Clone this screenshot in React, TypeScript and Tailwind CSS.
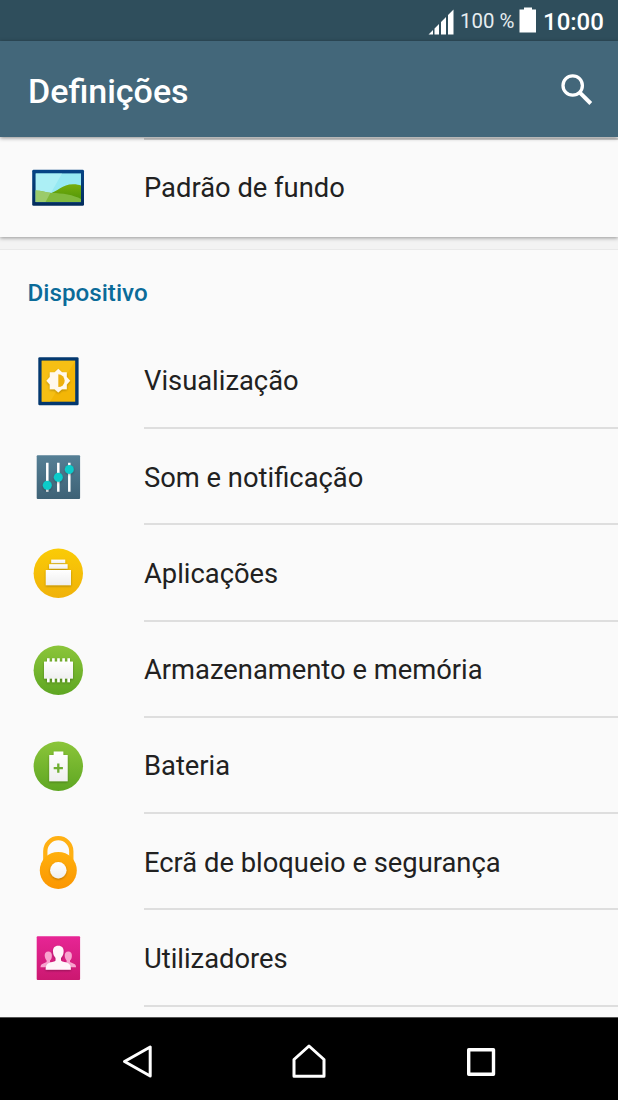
import type { ReactNode } from 'react'

function IconBox({ children }: { children: ReactNode }) {
  return (
    <svg viewBox="0 0 60 60" className="w-[60px] h-[60px] shrink-0">
      <defs>
        <linearGradient id="yellow" x1="0" y1="0" x2="0" y2="1">
          <stop offset="0" stopColor="#facb06" />
          <stop offset="1" stopColor="#f0b20a" />
        </linearGradient>
        <linearGradient id="green" x1="0" y1="0" x2="0" y2="1">
          <stop offset="0" stopColor="#8bc53a" />
          <stop offset="1" stopColor="#5ea622" />
        </linearGradient>
        <linearGradient id="paper" x1="0" y1="0" x2="0" y2="1">
          <stop offset="0" stopColor="#ffffff" />
          <stop offset="1" stopColor="#efefef" />
        </linearGradient>
        <filter id="drop" x="-20%" y="-20%" width="140%" height="150%">
          <feDropShadow dx="0" dy="1" stdDeviation="1" floodColor="#000" floodOpacity="0.3" />
        </filter>
      </defs>
      {children}
    </svg>
  )
}

function WallpaperIcon() {
  return (
    <IconBox>
      <defs>
        <linearGradient id="frame" x1="0" y1="0" x2="0" y2="1">
          <stop offset="0" stopColor="#064586" />
          <stop offset="1" stopColor="#032c5c" />
        </linearGradient>
        <linearGradient id="hill" x1="0" y1="0" x2="0" y2="1">
          <stop offset="0" stopColor="#76ad0c" />
          <stop offset="1" stopColor="#4d9408" />
        </linearGradient>
      </defs>
      <rect x="4.2" y="11.8" width="51.8" height="36" rx="1.4" fill="url(#frame)" />
      <rect x="7.7" y="15.4" width="45.3" height="28.7" fill="#96e9f2" />
      <path d="M7.7 15.4H34L24 33L18 44.1H7.7Z" fill="#b5f1f6" opacity="0.7" />
      <path d="M20 36C30 34 34 26.300 45 26.300C49 26.300 51 27 53 27.500V44.100H20Z" fill="url(#hill)" />
      <path d="M7.700 32.500C13 32.600 18 34.500 24 35C34 35 46 37 53 41V44.100H7.700Z" fill="#80b93d" />
      <path d="M7.700 32.500C13 32.600 18 34.500 22.500 34.700L17.500 44.100H7.700Z" fill="#9bcb6b" />
    </IconBox>
  )
}

function DisplayIcon() {
  return (
    <IconBox>
      <rect x="10.3" y="6.2" width="40.3" height="48" rx="1.3" fill="#03386f" />
      <rect x="13.7" y="9.7" width="33.500" height="41" fill="#f3b606" />
      <path d="M13.7 9.7H47.2L22 50.7H13.7Z" fill="#f8c51b" opacity="0.65" />
      <g filter="url(#drop)">
        <path
          d="M30.300 17.800L34 21.200H38.800V26L42.200 29.700L38.800 33.400V38.200H34L30.300 41.600L26.600 38.200H21.800V33.400L18.400 29.700L21.800 26V21.200H26.600Z"
          fill="#fff8ed"
        />
      </g>
      <path d="M30.300 23.300A6.400 6.400 0 0 1 30.300 36.100Z" fill="#edb00e" />
    </IconBox>
  )
}

function SoundIcon() {
  return (
    <IconBox>
      <defs>
        <linearGradient id="slate" x1="0" y1="0" x2="0" y2="1">
          <stop offset="0" stopColor="#557f95" />
          <stop offset="1" stopColor="#3e6276" />
        </linearGradient>
      </defs>
      <rect x="8.700" y="8.200" width="43.400" height="43.800" rx="1" fill="url(#slate)" />
      <path d="M19.300 15.800V44.800M30.300 15.800V44.800M41.300 15.800V44.800" stroke="#fff" strokeWidth="2.500" />
      <g fill="#08cbca" filter="url(#drop)">
        <circle cx="19.300" cy="38.200" r="4.500" />
        <circle cx="30.300" cy="30.300" r="4.500" />
        <circle cx="41.300" cy="22.400" r="4.500" />
      </g>
    </IconBox>
  )
}

function AppsIcon() {
  return (
    <IconBox>
      <circle cx="30.300" cy="30.300" r="24.700" fill="url(#yellow)" />
      <g fill="url(#paper)" filter="url(#drop)">
        <rect x="23.200" y="16.600" width="14" height="3.500" />
        <rect x="21.100" y="21.200" width="18.500" height="4.500" />
        <rect x="17.800" y="27" width="25.200" height="15.200" />
      </g>
    </IconBox>
  )
}

function MemoryIcon() {
  return (
    <IconBox>
      <circle cx="30.300" cy="30.300" r="24.700" fill="url(#green)" />
      <g filter="url(#drop)">
        <path
          d="M20.300 18.300V42.300M25.400 18.300V42.300M30.500 18.300V42.300M35.600 18.300V42.300M40.700 18.300V42.300"
          stroke="#fff"
          strokeWidth="2.600"
        />
        <rect x="16" y="21.600" width="29" height="17" fill="url(#paper)" />
      </g>
    </IconBox>
  )
}

function BatteryIcon() {
  return (
    <IconBox>
      <circle cx="30.300" cy="30.300" r="24.700" fill="url(#green)" />
      <path
        d="M25.700 15.400H35.300V19H39.700V45.300H21.200V19H25.700Z"
        fill="url(#paper)"
        filter="url(#drop)"
      />
      <path d="M30.300 27.600V36.800M25.700 32.200H34.900" stroke="#6fae32" strokeWidth="2.300" />
    </IconBox>
  )
}

function LockIcon() {
  return (
    <IconBox>
      <defs>
        <linearGradient id="orange" x1="0" y1="0" x2="0" y2="1">
          <stop offset="0" stopColor="#ffb00c" />
          <stop offset="1" stopColor="#fb9602" />
        </linearGradient>
      </defs>
      <path
        d="M17.300 32V19.200A13 13 0 0 1 43.300 19.200V32"
        fill="none"
        stroke="#ffb013"
        strokeWidth="4.300"
      />
      <circle cx="30.300" cy="38.400" r="18.500" fill="url(#orange)" />
      <circle cx="30.300" cy="38.200" r="8.200" fill="url(#paper)" filter="url(#drop)" />
    </IconBox>
  )
}

function UsersIcon() {
  return (
    <IconBox>
      <defs>
        <linearGradient id="pink" x1="0" y1="0" x2="0" y2="1">
          <stop offset="0" stopColor="#e72595" />
          <stop offset="1" stopColor="#cb1870" />
        </linearGradient>
      </defs>
      <rect x="8.700" y="8.200" width="43.400" height="43.800" rx="1" fill="url(#pink)" />
      <g fill="#f9a3cf">
        <path d="M20.300 23.500C17.800 23.500 16.600 25.200 16.700 27.700C16.800 30 18 31.500 18.600 32.500V34L14.300 35.900C13 36.500 12.600 37.500 12.500 39.200H28V34H22V32.500C23 31.500 23.900 30 23.900 27.700C24 25.200 22.800 23.500 20.300 23.500Z" />
        <path d="M40.300 23.500C37.800 23.500 36.600 25.200 36.700 27.700C36.800 30 38 31.500 38.600 32.500V34H32V39.200H48.100C48 37.500 47.600 36.500 46.300 35.900L42 34V32.500C43 31.500 43.900 30 43.900 27.700C44 25.200 42.800 23.500 40.300 23.500Z" />
      </g>
      <path
        d="M30.300 17.700C26.600 17.700 24.800 20 25 23.500C25.100 26.600 26.500 28.700 27.600 29.900V32.600C27 34 20.800 34.700 19.200 36.200C17.900 37.400 17.700 39.500 17.700 41.800H42.900C42.900 39.500 42.700 37.400 41.400 36.200C39.800 34.700 33.600 34 33 32.600V29.900C34.100 28.700 35.500 26.600 35.600 23.500C35.800 20 34 17.700 30.300 17.700Z"
        fill="#fff5fa"
        filter="url(#drop)"
      />
    </IconBox>
  )
}

const deviceItems = [
  { label: 'Visualização', icon: <DisplayIcon /> },
  { label: 'Som e notificação', icon: <SoundIcon /> },
  { label: 'Aplicações', icon: <AppsIcon /> },
  { label: 'Armazenamento e memória', icon: <MemoryIcon /> },
  { label: 'Bateria', icon: <BatteryIcon /> },
  { label: 'Ecrã de bloqueio e segurança', icon: <LockIcon /> },
  { label: 'Utilizadores', icon: <UsersIcon /> },
]

function StatusBar() {
  return (
    <div className="h-[41px] bg-[#2f4e5c] flex items-center justify-end pr-[14px] text-white">
      <svg viewBox="0 0 26 26" className="w-[26px] h-[26px] mt-[2px]" fill="#fff">
        <path d="M0.500 25.500L5 21V25.500ZM6.500 19.500L11 15V25.500H6.500ZM13 13L18 8V25.500H13ZM20 6L25.500 0.500V25.500H20Z" />
      </svg>
      <span className="ml-[6px] w-[56px] pt-[2px] text-[20.400px] leading-none text-[#e6edf0] whitespace-nowrap">100 %</span>
      <svg viewBox="0 0 18 26" className="ml-[3px] w-[18px] h-[26px] mb-[1px]" fill="#fff">
        <path d="M5 0.500H13V2.500H17V25.500H0.500V2.500H5Z" />
      </svg>
      <span className="ml-[6px] w-[61px] pt-[2px] text-[24px] leading-none font-medium whitespace-nowrap">10:00</span>
    </div>
  )
}

function AppBar() {
  return (
    <header className="relative h-[96px] bg-[#43677a] flex items-center justify-between pl-7 pr-[25px] text-white shadow-[0_1px_4px_rgba(0,0,0,0.45)]">
      <h1 className="text-[34px] leading-none font-medium pt-1">Definições</h1>
      <svg viewBox="0 0 32 32" className="w-8 h-8 mt-px" fill="none" stroke="#fff">
        <circle cx="11.700" cy="11.500" r="9.700" strokeWidth="3.300" />
        <path d="M18.600 18.300L29.800 29.500" strokeWidth="4" />
      </svg>
    </header>
  )
}

function SettingsRow({ label, icon, divider }: { label: string; icon: ReactNode; divider?: boolean }) {
  return (
    <div className="h-[96.250px] pl-7 flex">
      <div className="flex items-center">{icon}</div>
      <div
        className={
          divider
            ? 'ml-14 flex-1 flex items-center pt-1 border-b-2 border-[#dedede]'
            : 'ml-14 flex-1 flex items-center pt-0.5'
        }
      >
        <span className="text-[27.350px] leading-none text-[#212121] whitespace-nowrap">{label}</span>
      </div>
    </div>
  )
}

function NavBar() {
  return (
    <nav className="h-[83px] bg-black border-t border-[#555] flex items-center pt-[3px]">
      <svg viewBox="0 0 40 40" className="ml-[118px] w-10 h-10" fill="none" stroke="#fff" strokeWidth="3" strokeLinejoin="round">
        <path d="M6.500 20.500L32.200 6V35Z" />
      </svg>
      <svg viewBox="0 0 40 40" className="ml-[131px] w-10 h-10" fill="none" stroke="#fff" strokeWidth="3" strokeLinejoin="round">
        <path d="M20 5L35 18.500V35.300H5V18.500Z" />
      </svg>
      <svg viewBox="0 0 40 40" className="ml-[132px] w-10 h-10" fill="none" stroke="#fff" strokeWidth="3.400" strokeLinejoin="round">
        <path d="M7.700 8.700H32.500V33.200H7.700Z" />
      </svg>
    </nav>
  )
}

export default function App() {
  return (
    <div className="w-[618px] h-[1100px] flex flex-col overflow-hidden bg-[#f3f3f3] font-[Roboto,sans-serif]">
      <StatusBar />
      <AppBar />
      <main className="flex-1 min-h-0 overflow-hidden">
        <section className="h-[100px] bg-[#fafafa] shadow-[0_1px_4px_rgba(0,0,0,0.4)]">
          <div className="h-[3px] ml-36 border-b-2 border-[#d0d0d0]" />
          <SettingsRow label="Padrão de fundo" icon={<WallpaperIcon />} />
        </section>
        <section className="mt-3 bg-[#fafafa] border-t border-[#e9e9e9]">
          <h2 className="h-[82.800px] pl-[27.500px] pt-[31px] text-[24.200px] leading-none font-medium text-[#0b6b99]">Dispositivo</h2>
          {deviceItems.map((item) => (
            <SettingsRow key={item.label} label={item.label} icon={item.icon} divider />
          ))}
          <div className="h-4" />
        </section>
      </main>
      <NavBar />
    </div>
  )
}
